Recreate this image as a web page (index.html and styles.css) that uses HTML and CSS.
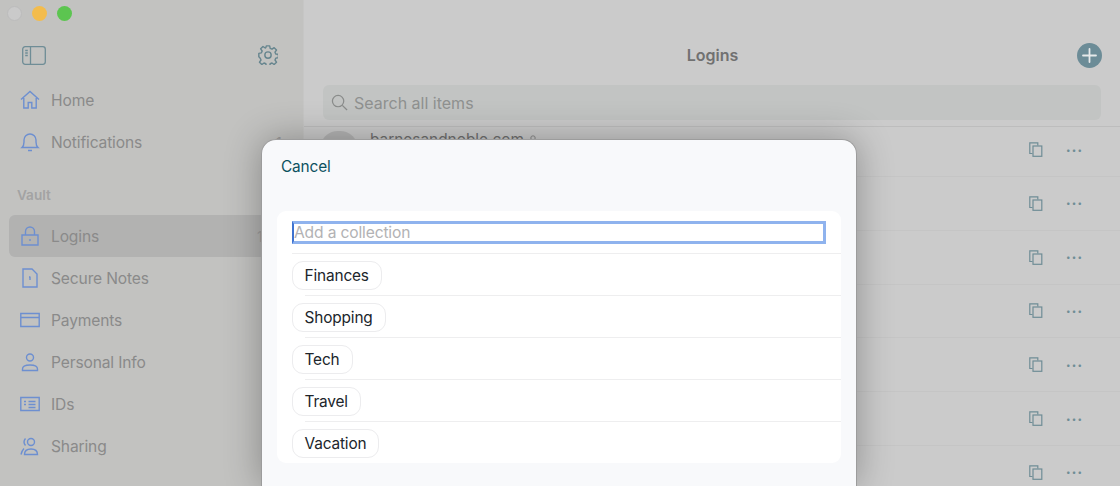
FILE: index.html
```html
<!DOCTYPE html>
<html lang="en">
<head>
<meta charset="utf-8">
<title>Logins</title>
<link rel="stylesheet" href="styles.css">
</head>
<body>
<div class="app">
  <aside class="sidebar">
    <div class="lights"><span class="light grey"></span><span class="light amber"></span><span class="light green"></span></div>
    <div class="tools">
      <svg class="i-toggle" viewBox="0 0 24 19" fill="none" stroke="#6f8d96" stroke-width="1.3"><rect x=".7" y=".7" width="22.6" height="17.6" rx="2.5"/><path d="M8.5 1v17M3.2 4.5h2.6M3.2 7h2.6M3.2 9.500h2.6"/></svg>
      <svg class="i-gear" viewBox="0 0 24 24" fill="none" stroke="#66858e" stroke-width="1.700" stroke-linejoin="round"><circle cx="12" cy="12" r="3.800"/><path d="M10 1h4l.6 3.100 2.200.9 2.600-1.800 2.800 2.800-1.800 2.600.9 2.200 3.100.4v4l-3.100.6-.9 2.200 1.800 2.600-2.800 2.800-2.600-1.800-2.200.9-.6 3.100h-4l-.6-3.100-2.200-.9-2.600 1.800-2.800-2.800 1.800-2.600-.9-2.200L1 14v-4l3.100-.6.9-2.200-1.800-2.600L6 1.800l2.600 1.800 .8-.4z"/></svg>
    </div>
    <nav class="nav">
      <a class="item"><svg class="ico" viewBox="0 0 20 20"><path d="M1 9.500 10 1.500l9 8M3.800 8v10h4.400v-5.500h3.600V18h4.400V8"/></svg><span>Home</span></a>
      <a class="item"><svg class="ico" viewBox="0 0 20 20"><path d="M2 15.500c1.600-1.400 2-3 2-5.500V8a6 6 0 0 1 12 0v2c0 2.500.4 4.100 2 5.500zM8 18.500h4"/></svg><span>Notifications</span><em class="count far">1</em></a>
      <div class="section">Vault</div>
      <a class="item active"><svg class="ico" viewBox="0 0 20 20"><path d="M2 9h16v10H2zM5.500 9V5.500a4.500 4.500 0 0 1 9 0V9M10 13v2"/></svg><span>Logins</span><em class="count">1</em></a>
      <a class="item"><svg class="ico" viewBox="0 0 20 20"><path d="M3 1h9l5 5v13H3zM10 8.500v3.500M9 9h1"/></svg><span>Secure Notes</span></a>
      <a class="item"><svg class="ico" viewBox="0 0 20 20"><path d="M.8 3.500h18.400v13H.8zM.8 7.500h18.400"/></svg><span>Payments</span></a>
      <a class="item"><svg class="ico" viewBox="0 0 20 20"><circle cx="10" cy="5.500" r="3.500"/><path d="M2.500 18.500v-1.500c0-2.500 2.500-4 7.500-4s7.500 1.500 7.500 4v1.500z"/></svg><span>Personal Info</span></a>
      <a class="item"><svg class="ico" viewBox="0 0 20 20"><path d="M.8 3.500h18.400v13H.8zM4 7.500h2M8.500 7.500h7M4 10.500h2M8.500 10.500h7M8.500 13.500h7"/></svg><span>IDs</span></a>
      <a class="item"><svg class="ico" viewBox="0 0 20 20"><circle cx="11" cy="6" r="3.500"/><path d="M4.500 18.500c0-3.500 2.500-5.500 6.500-5.500s6.500 2 6.500 5.500zM5.500 2.500C3.800 4.500 3.800 7.500 5.500 9.500M4 12.500c-1.500 1.500-2.500 3.500-3 6"/></svg><span>Sharing</span></a>
    </nav>
  </aside>
  <main class="main">
    <header class="head"><h1>Logins</h1>
      <svg class="plus" viewBox="0 0 25 25"><circle cx="12.500" cy="12.500" r="12.500" fill="#6c8c97"/><path d="M12.500 6v13M6 12.500h13" stroke="#e6e9ea" stroke-width="1.800" stroke-linecap="round"/></svg>
    </header>
    <div class="search"><svg class="mag" viewBox="0 0 18 18" fill="none" stroke="#8a8c8b" stroke-width="1.300"><circle cx="7.500" cy="7.500" r="6"/><path d="m12 12 5 5"/></svg><span>Search all items</span></div>
    <ul class="rows">
      <li class="row"><span class="avatar"></span><span class="site">barnesandnoble.com</span><svg class="key" viewBox="0 0 8 10" fill="none" stroke="#8a8a8a"><circle cx="4" cy="3" r="2.200"/><path d="M4 5v4"/></svg><span class="acts"><svg class="copy" viewBox="0 0 14 15"><use href="#c"/></svg><span class="more">•••</span></span></li>
      <li class="row"><span class="acts"><svg class="copy" viewBox="0 0 14 15"><use href="#c"/></svg><span class="more">•••</span></span></li>
      <li class="row"><span class="acts"><svg class="copy" viewBox="0 0 14 15"><use href="#c"/></svg><span class="more">•••</span></span></li>
      <li class="row"><span class="acts"><svg class="copy" viewBox="0 0 14 15"><use href="#c"/></svg><span class="more">•••</span></span></li>
      <li class="row"><span class="acts"><svg class="copy" viewBox="0 0 14 15"><use href="#c"/></svg><span class="more">•••</span></span></li>
      <li class="row"><span class="acts"><svg class="copy" viewBox="0 0 14 15"><use href="#c"/></svg><span class="more">•••</span></span></li>
      <li class="row"><span class="acts"><svg class="copy" viewBox="0 0 14 15"><use href="#c"/></svg><span class="more">•••</span></span></li>
    </ul>
    <svg class="defs" width="0" height="0"><defs><g id="c" fill="none" stroke="#6f8d96" stroke-width="1.200"><path d="M3.500 11.500H.8V.8h8V3.500"/><rect x="4" y="4" width="8.800" height="10.300"/></g></defs></svg>
  </main>
</div>
<section class="modal">
  <div class="cancel">Cancel</div>
  <div class="card">
    <div class="line first"><input class="field" type="text" placeholder="Add a collection"></div>
    <div class="line"><span class="chip">Finances</span></div>
    <div class="line"><span class="chip">Shopping</span></div>
    <div class="line"><span class="chip">Tech</span></div>
    <div class="line"><span class="chip">Travel</span></div>
    <div class="line"><span class="chip">Vacation</span></div>
  </div>
</section>
</body>
</html>
```
FILE: styles.css
```css
* { box-sizing: border-box; }
html, body { margin: 0; height: 100%; overflow: hidden; }
body { font-family: Inter, "Liberation Sans", sans-serif; background: #cbcbcb; }
.app { display: flex; height: 486px; overflow: hidden; }
.sidebar { width: 304px; flex: none; background: #c2c2c0; border-right: 1px solid #c6c6c5; padding: 6px 9px 0; }
.lights { display: flex; gap: 10px; margin-left: -2px; }
.light { width: 15px; height: 15px; border-radius: 50%; }
.grey { background: #cacaca; border: 1px solid #bcbcbc; }
.amber { background: #f3bc4c; }
.green { background: #5cc550; }
.tools { display: flex; justify-content: space-between; align-items: center; padding: 24px 16px 0 13px; height: 44px; margin-bottom: 14px; }
.i-toggle { width: 24px; height: 19px; }
.i-gear { width: 20px; height: 20px; }
.nav { display: flex; flex-direction: column; }
.item { display: flex; align-items: center; height: 42px; padding-left: 11px; border-radius: 6px; color: #8a8a8a; font-size: 15.600px; letter-spacing: -.15px; position: relative; }
.item.active { background: #b2b2b1; }
.ico { width: 20px; height: 20px; margin-right: 11px; fill: none; stroke: #6d8fd0; stroke-width: 1.400; flex: none; }
.count { position: absolute; left: 248px; font-style: normal; color: #9b9b9b; font-size: 14px; }
.count.far { left: 267px; }
.section { height: 52px; padding: 24px 8px 0; color: #a3a3a3; font-size: 13.600px; font-weight: 600; line-height: 17px; }
.main { flex: 1; min-width: 0; display: flex; flex-direction: column; overflow: hidden; }
.head { height: 85px; flex: none; padding: 25px 18px 0 19px; position: relative; display: flex; align-items: center; justify-content: center; }
.head h1 { margin: 0; font-size: 16px; font-weight: 600; color: #717171; }
.plus { position: absolute; right: 18px; top: 42.500px; width: 25px; height: 25px; }
.search { margin: 0 19px; height: 35px; background: #c2c4c3; border-radius: 6px; display: flex; align-items: center; padding-left: 8px; color: #8f9190; font-size: 16px; flex: none; }
.mag { width: 17px; height: 17px; margin-right: 6px; }
.rows { list-style: none; margin: 6px 0 0; padding: 0; border-top: 1px solid #bdbdbd; flex: none; }
.row { height: 53.800px; border-bottom: 1px solid #c5c5c5; display: flex; align-items: center; padding: 0 36px 0 16px; position: relative; }
.row:first-child { height: 50px; padding-bottom: 4px; }
.avatar { position: absolute; left: 16px; top: 4px; width: 38px; height: 38px; border-radius: 18px; background: #b5b5b5; }
.site { position: absolute; left: 66px; top: 3px; font-size: 15.400px; color: #717171; }
.key { position: absolute; left: 225px; top: 8px; width: 8px; height: 10px; }
.acts { margin-left: auto; display: flex; align-items: center; gap: 23px; }
.copy { width: 14px; height: 15px; }
.more { color: #6f8d96; font-size: 8px; letter-spacing: 1.300px; width: 18px; }
.defs { position: absolute; }
.modal { position: absolute; left: 261px; top: 139px; width: 596px; height: 347px; background: #f8f9fb; border: 1px solid #9c9c9c; border-bottom: 0; border-radius: 15px 15px 0 0; box-shadow: 0 0 36px rgba(0,0,0,.3); padding: 15px 15px 0; }
.cancel { font-size: 15.400px; letter-spacing: -.15px; color: #0c5160; line-height: 24px; padding-left: 4px; }
.card { margin-top: 32px; background: #fff; border-radius: 9px; padding: 0 0 0 15px; height: 252px; }
.line { height: 42px; display: flex; align-items: center; position: relative; }
.line + .line::before { content: ""; position: absolute; left: 13px; right: 0; top: 0; border-top: 1px solid #eeeeef; }
.line.first + .line::before { left: 0; }
.field { width: 534px; height: 23px; border: 3px solid #8fb3ee; border-left: 2px solid #3f73d0; outline: 0; padding: 0; font: 15.600px Inter, "Liberation Sans", sans-serif; letter-spacing: -.15px; background: #fff; }
.field::placeholder { color: #b2b2b4; opacity: 1; }
.chip { display: inline-flex; align-items: center; height: 29px; padding: 0 12px 0 11.500px; border: 1px solid #ececee; border-radius: 11px; font-size: 15.400px; letter-spacing: -.15px; color: #20252b; margin-top: 2px; }
```
